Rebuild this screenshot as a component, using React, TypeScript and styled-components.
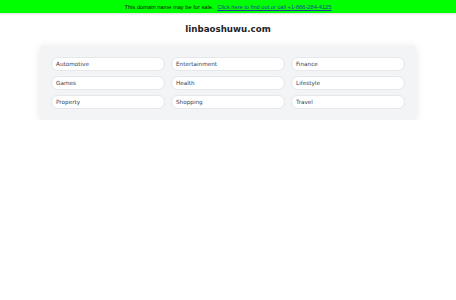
import React from "react";
import styled, { createGlobalStyle } from "styled-components";

const Global = createGlobalStyle`
  html, body { margin: 0; padding: 0; background: #ffffff; }
  body { font-family: "DejaVu Sans", sans-serif; }
`;

const Banner = styled.div`
  height: 13px;
  background: #00ff00;
  display: flex;
  align-items: center;
  justify-content: center;
  gap: 4px;
  font-family: "Liberation Sans", Arial, sans-serif;
  font-size: 5.7px;
  color: #111;
  box-shadow: 0 1px 2px rgba(0,0,0,0.15);
`;

const BannerLink = styled.a`
  color: #1a3d9e;
  text-decoration: underline;
`;

const Title = styled.h1`
  margin: 10px 0 0;
  text-align: center;
  font-size: 8.7px;
  line-height: 12px;
  font-weight: bold;
  color: #1f2328;
`;

const Panel = styled.div`
  width: 354px;
  margin: 10px auto 0;
  padding: 12px 11px 11px;
  background: #f3f4f6;
  border-radius: 4px;
  box-shadow: 0 2px 8px rgba(0,0,0,0.1);
  display: grid;
  grid-template-columns: repeat(3, 1fr);
  column-gap: 6px;
  row-gap: 5px;
`;

const Pill = styled.div`
  height: 14px;
  box-sizing: border-box;
  background: #ffffff;
  border: 1px solid #e5e7eb;
  border-radius: 7px;
  padding-left: 4px;
  display: flex;
  align-items: center;
  font-size: 5.7px;
  color: #374151;
`;

const items = ["Automotive", "Entertainment", "Finance", "Games", "Health", "Lifestyle", "Property", "Shopping", "Travel"];

export default function App() {
  return (
    <>
      <Global />
      <Banner>
        <span>This domain name may be for sale.</span>
        <BannerLink href="#">Click here to find out or call +1-866-284-4125</BannerLink>
      </Banner>
      <Title>linbaoshuwu.com</Title>
      <Panel>
        {items.map((i) => (
          <Pill key={i}>{i}</Pill>
        ))}
      </Panel>
    </>
  );
}
